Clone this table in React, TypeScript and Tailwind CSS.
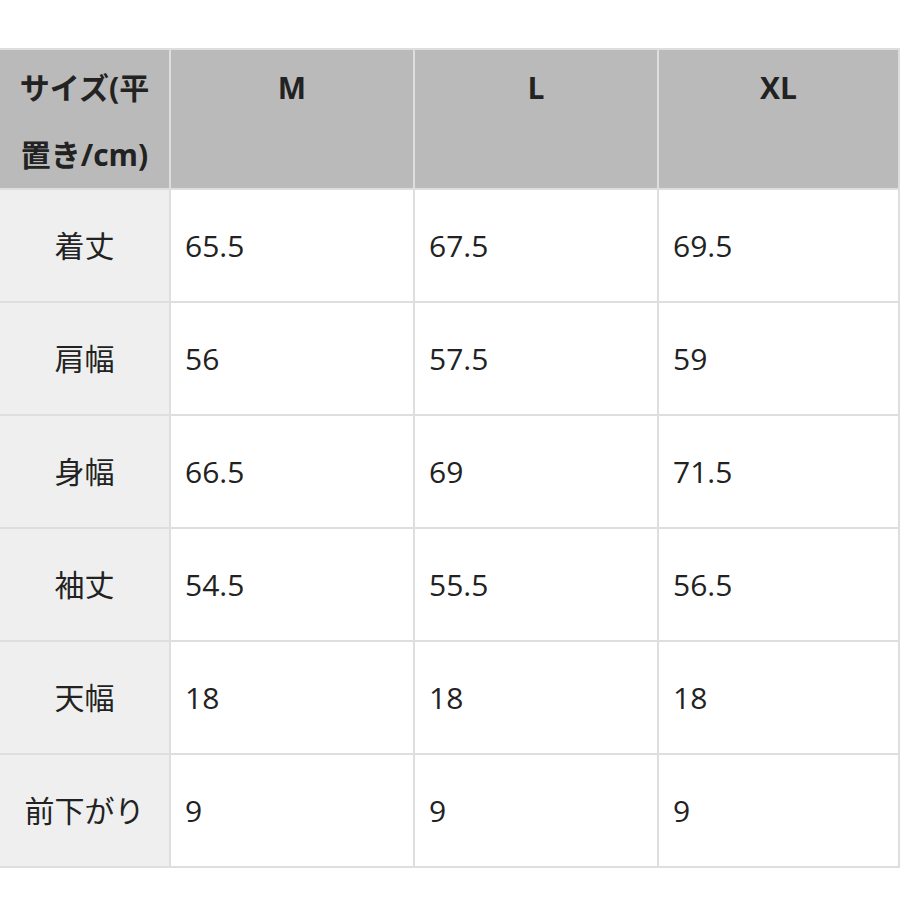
const rows: [string, string, string, string][] = [
  ["着丈", "65.5", "67.5", "69.5"],
  ["肩幅", "56", "57.5", "59"],
  ["身幅", "66.5", "69", "71.5"],
  ["袖丈", "54.5", "55.5", "56.5"],
  ["天幅", "18", "18", "18"],
  ["前下がり", "9", "9", "9"],
]

export default function App() {
  return (
    <div
      className="w-[900px] h-[900px] bg-white overflow-hidden text-[#222]"
      style={{ fontFamily: '"Open Sans", "Noto Sans CJK JP", sans-serif' }}
    >
      <div className="mt-[48px] pt-[2px] pr-[2px] pb-[2px] bg-[#dedede] grid grid-cols-[169px_242px_242px_1fr] gap-[2px] text-[30px]">
        {/* Header */}
        <div className="bg-[#bababa] h-[138px] pt-[4px] text-center font-bold leading-[67px] whitespace-nowrap">
          サイズ(平
          <br />
          置き/cm)
        </div>
        {["M", "L", "XL"].map((s) => (
          <div key={s} className="bg-[#bababa] h-[138px] pt-[4px] text-center font-bold leading-[67px]">
            {s}
          </div>
        ))}

        {/* Body */}
        {rows.map((r) => (
          <>
            <div key={r[0]} className="bg-[#efefef] h-[111px] flex items-center justify-center">
              {r[0]}
            </div>
            {r.slice(1).map((v, i) => (
              <div key={r[0] + i} className="bg-white h-[111px] flex items-center pl-[14px]">
                {v}
              </div>
            ))}
          </>
        ))}
      </div>
    </div>
  )
}
